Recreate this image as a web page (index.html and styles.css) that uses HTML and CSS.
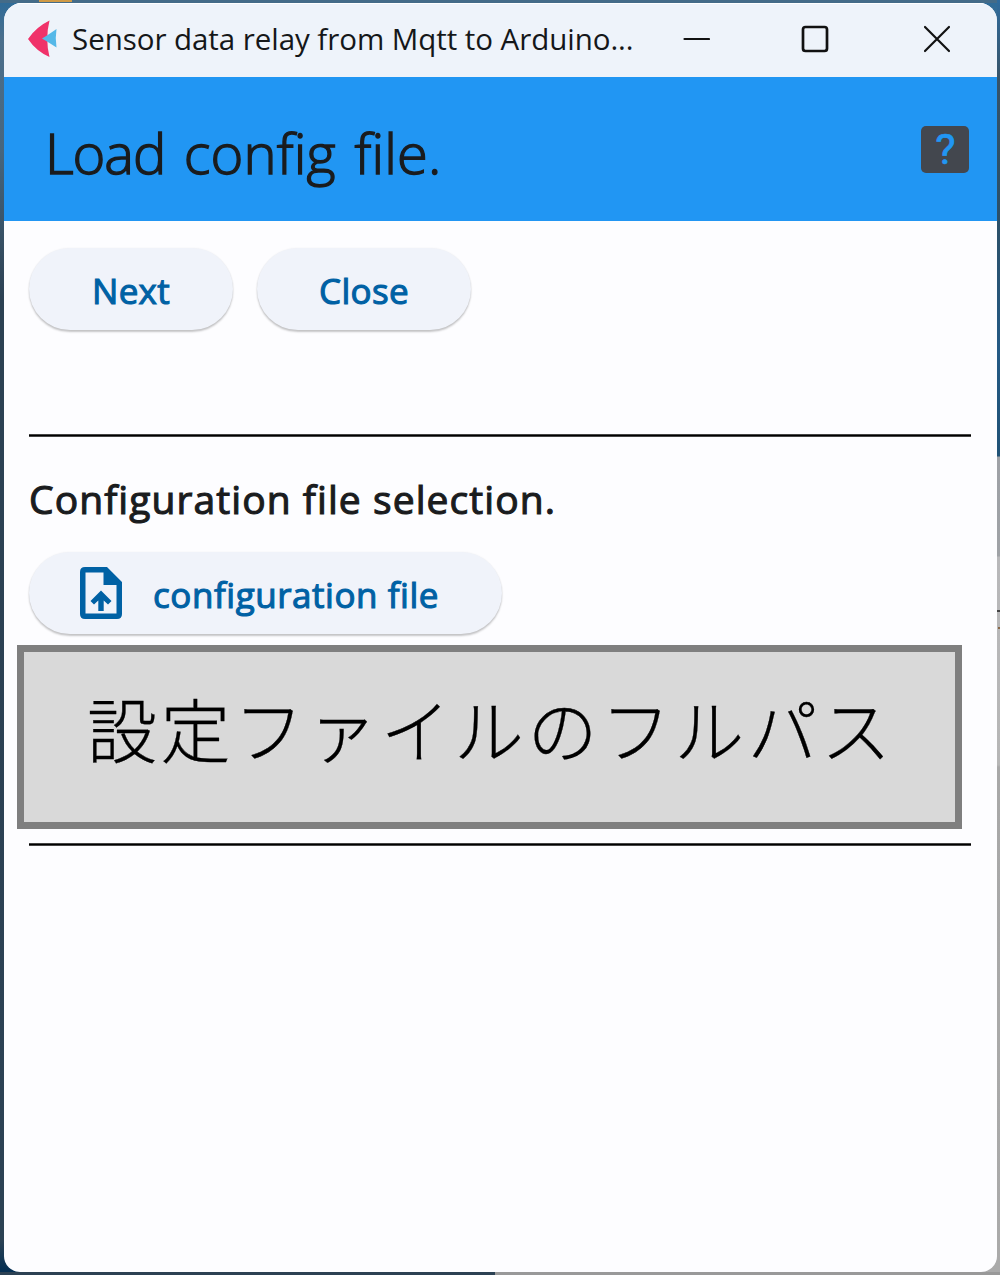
FILE: index.html
```html
<!DOCTYPE html>
<html lang="ja">
<head>
<meta charset="utf-8">
<title>Sensor data relay</title>
<link rel="stylesheet" href="styles.css">
</head>
<body>
<div class="desktop">
<div class="window">
  <header class="titlebar">
    <svg class="logo" width="30" height="38" viewBox="0 0 30 38"><path d="M21.500 0.500Q17 19 21.500 37Q8 31 0 19Q8 7 21.500 0.500Z" fill="#f0326a"/><path d="M14 18.500Q20 15 28.500 9Q27 18 28.500 27.500Q20 22 14 18.500Z" fill="#55b8e8"/></svg>
    <span class="caption">Sensor data relay from Mqtt to Arduino...</span>
    <div class="controls">
      <svg width="28" height="28" viewBox="0 0 28 28"><path d="M2.500 14H27" /></svg>
      <svg width="28" height="28" viewBox="0 0 28 28"><rect x="2" y="2" width="24" height="24" rx="2.500"/></svg>
      <svg width="28" height="28" viewBox="0 0 28 28"><path d="M2 2L26 26M26 2L2 26"/></svg>
    </div>
  </header>
  <div class="appbar">
    <h1 class="heading"><span class="tight">Load</span> config file.</h1>
    <div class="help">?</div>
  </div>
  <main class="content">
    <div class="actions">
      <button class="btn btn-next"><span>Next</span></button>
      <button class="btn btn-close"><span>Close</span></button>
    </div>
    <div class="rule"></div>
    <h2 class="label">Configuration file selection.</h2>
    <button class="btn btn-file">
      <svg width="42" height="52" viewBox="0 0 42 52"><path fill-rule="evenodd" d="M5 0H27L42 15V47Q42 52 37 52H5Q0 52 0 47V5Q0 0 5 0ZM5.500 5.500V46.500H36.500V18H23.500V5.500Z" fill="#0061a4"/><path d="M21 23.500L31.500 34L28 37.500L23.700 33.500V44H18.300V33.500L14 37.500L10.500 34Z" fill="#0061a4"/></svg>
      <span>configuration file</span>
    </button>
    <div class="path"><span>設定ファイルのフルパス</span></div>
    <div class="rule rule-end"></div>
  </main>
</div>
</div>
</body>
</html>
```
FILE: styles.css
```css
* { box-sizing: border-box; }
body { margin: 0; font-family: "Open Sans", "Noto Sans", sans-serif; }
.desktop {
  width: 1000px; height: 1275px; padding: 3px 3px 3px 4px; overflow: hidden;
  background:
    linear-gradient(#d09a45, #d09a45) 39px 0 / 33px 2px no-repeat,
    linear-gradient(#444, #444) 997px 610px / 3px 2px no-repeat,
    linear-gradient(#8a6848, #8a6848) 998px 627px / 2px 2px no-repeat,
    linear-gradient(90deg, #2c4153 495px, #999 495px) 0 1272px / 1000px 3px no-repeat,
    linear-gradient(#aaa, #aaa) 980px 1250px / 20px 25px no-repeat,
    linear-gradient(#2f6b9d 0, #375367 80px, #2c5068 220px, #245a85 350px, #205276 456px, #9ea1a6 457px, #9fa2a6 556px, #b8b8ba 557px, #b6b6b6 765px, #a8a8a8 767px, #aaa 1275px) 997px 0 / 3px 1275px no-repeat,
    linear-gradient(#446b88, #446b88) 0 0 / 1000px 3px no-repeat,
    linear-gradient(#2d6b99 0, #4b6f8c 40px, #47667e 150px, #2c4153 300px, #2c4254 1240px, #052f52 1270px);
}
.window { width: 993px; height: 1269px; border-radius: 18px 18px 16px 16px; overflow: hidden; background: #fdfdff; display: flex; flex-direction: column; }
.titlebar { height: 74px; background: #eef3fa; display: flex; align-items: center; padding: 0 46px 0 24px; border-top: 1px solid #fff; }
.logo { margin-top: -4px; }
.caption { font-size: 29.500px; letter-spacing: -0.050px; line-height: 40px; color: #151719; margin: -4px 0 0 14px; white-space: nowrap; }
.controls { margin-left: auto; display: flex; gap: 92px; margin-top: -3px; }
.controls svg { fill: none; stroke: #111; stroke-width: 2.200; stroke-linecap: round; }
.controls svg:nth-child(2) { margin: 0 2px 0 -1px; stroke-width: 2.700; }
.appbar { height: 144px; background: #2196f3; display: flex; align-items: center; justify-content: space-between; padding: 0 28px 0 42px; }
.heading { margin: 5px 0 0 -1px; font-size: 56px; font-weight: 300; line-height: 80px; color: #1a1c1e; white-space: nowrap; letter-spacing: 0.150px; word-spacing: 4px; -webkit-text-stroke: 1.400px #1a1c1e; }
.tight { letter-spacing: -1.100px; }
.help { width: 48px; height: 47px; border-radius: 5px; background: #43474e; color: #2196f3; font: 400 43px/47px Roboto, sans-serif; text-align: center; padding-left: 1px; -webkit-text-stroke: 0.700px #2196f3; }
.content { padding: 27px 26px 0 25px; display: flex; flex-direction: column; align-items: flex-start; }
.actions { display: flex; gap: 24px; }
.btn { height: 82px; border: 0; border-radius: 41px; background: #f0f3fa; box-shadow: 0 2px 2px rgba(0,0,0,.22), 0 0 2px rgba(0,0,0,.06); color: #0061a4; font: 400 35px/50px "Open Sans", "Noto Sans", sans-serif; letter-spacing: 0.300px; -webkit-text-stroke: 1.100px #0061a4; padding: 3px 0 0; display: flex; align-items: center; justify-content: center; white-space: nowrap; }
.btn-next { width: 204px; }
.btn-close { width: 214px; }
.rule { width: 942px; height: 3px; margin-top: 104px; background: #000; border: solid #444; border-width: 1px 0; }
.label { margin: 37px 0 27px; font-size: 39px; line-height: 50px; font-weight: 400; letter-spacing: 1.070px; -webkit-text-stroke: 1.100px #1a1c1e; color: #1a1c1e; white-space: nowrap; }
.btn-file { width: 473px; justify-content: flex-start; padding: 0 0 0 51px; gap: 31px; margin-top: 1px; letter-spacing: 0.550px; }
.btn-file span { padding-top: 4px; }
.path { width: 945px; height: 184px; margin: 11px 0 0 -12px; border: 7px solid #7f7f7f; background: #d9d9d9; color: #000; font: 300 70px/100px "Noto Sans CJK JP", sans-serif; letter-spacing: 3.400px; padding: 26px 0 0 63px; white-space: nowrap; -webkit-text-stroke: 0.300px #000; }
.rule-end { margin-top: 14px; }
```
